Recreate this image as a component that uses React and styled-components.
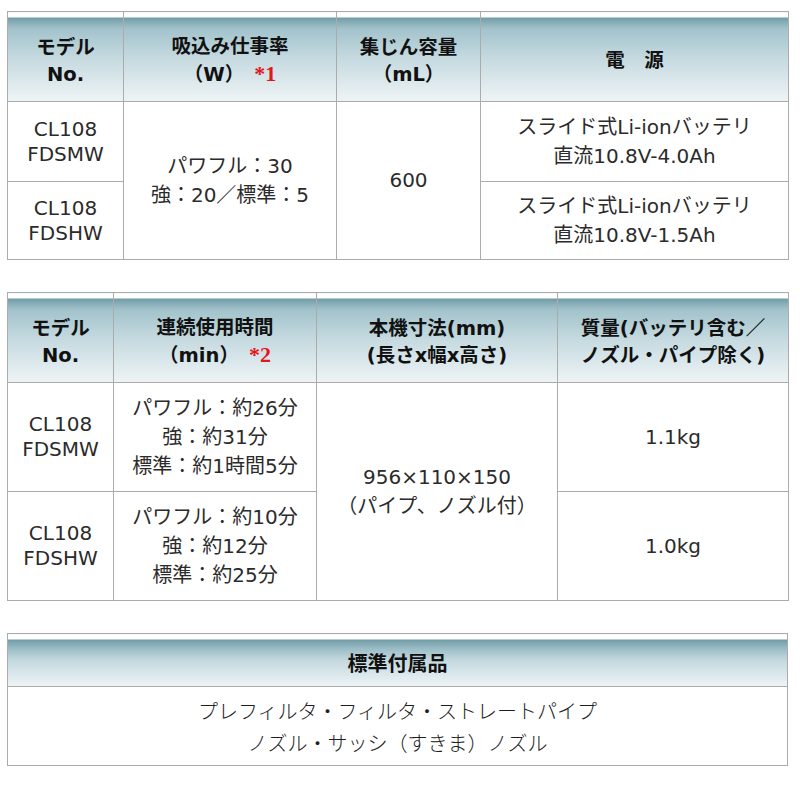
import styled, { createGlobalStyle } from "styled-components";

const GlobalStyle = createGlobalStyle`
  body {
    margin: 0;
    background: #fff;
    font-family: "DejaVu Sans", "Noto Sans CJK JP", sans-serif;
  }
`;

const Page = styled.div`
  display: flex;
  flex-direction: column;
  gap: 32px;
  padding: 11px 0 0 7px;
`;

const Table = styled.table`
  width: 781px;
  border-collapse: collapse;
  table-layout: fixed;
  border: 1px solid #ababab;
`;

const Row = styled.tr`
  height: ${(p) => p.$h}px;
`;

const HeadCell = styled.th`
  padding: 8px 4px 0;
  border: 1px solid #ababab;
  background: linear-gradient(
    to bottom,
    #ffffff 0,
    #ffffff 5px,
    #6f9aa4 5px,
    #83aab4 9px,
    #a2c2cb 16px,
    #c4d9df 50%,
    #eef4f6 100%
  );
  color: #111;
  font-size: ${(p) => p.$size || 19.5}px;
  font-weight: 700;
  line-height: 27px;
  text-align: center;
  vertical-align: middle;
`;

const Cell = styled.td`
  padding: 0 4px;
  border: 1px solid #ababab;
  color: #2b2b2b;
  font-size: 20px;
  line-height: ${(p) => (p.$model ? 25 : 29)}px;
  text-align: center;
  vertical-align: middle;
`;

const ListCell = styled(Cell)`
  color: #1e1e1e;
  font-family: "Noto Sans CJK JP", sans-serif;
  font-weight: 300;
  line-height: 32px;
  padding-top: 2px;
`;

const Note = styled.span`
  margin-left: 10px;
  color: #e3161c;
  font-family: "Liberation Serif", serif;
  font-weight: 700;
  font-size: 22px;
`;

const Lines = ({ items }) =>
  items.map((t, i) => (
    <span key={i}>
      {t}
      {i < items.length - 1 && <br />}
    </span>
  ));

export default function App() {
  return (
    <>
      <GlobalStyle />
      <Page>
        <Table>
          <colgroup>
            <col style={{ width: 116 }} />
            <col style={{ width: 213 }} />
            <col style={{ width: 144 }} />
            <col style={{ width: 308 }} />
          </colgroup>
          <thead>
            <Row $h={90}>
              <HeadCell><Lines items={["モデル", "No."]} /></HeadCell>
              <HeadCell>
                吸込み仕事率<br />（W）<Note>*1</Note>
              </HeadCell>
              <HeadCell><Lines items={["集じん容量", "（mL）"]} /></HeadCell>
              <HeadCell>電　源</HeadCell>
            </Row>
          </thead>
          <tbody>
            <Row $h={80}>
              <Cell $model><Lines items={["CL108", "FDSMW"]} /></Cell>
              <Cell rowSpan={2}><Lines items={["パワフル：30", "強：20／標準：5"]} /></Cell>
              <Cell rowSpan={2}>600</Cell>
              <Cell><Lines items={["スライド式Li-ionバッテリ", "直流10.8V-4.0Ah"]} /></Cell>
            </Row>
            <Row $h={78}>
              <Cell $model><Lines items={["CL108", "FDSHW"]} /></Cell>
              <Cell><Lines items={["スライド式Li-ionバッテリ", "直流10.8V-1.5Ah"]} /></Cell>
            </Row>
          </tbody>
        </Table>

        <Table>
          <colgroup>
            <col style={{ width: 106 }} />
            <col style={{ width: 203 }} />
            <col style={{ width: 241 }} />
            <col style={{ width: 231 }} />
          </colgroup>
          <thead>
            <Row $h={90}>
              <HeadCell><Lines items={["モデル", "No."]} /></HeadCell>
              <HeadCell>
                連続使用時間<br />（min）<Note>*2</Note>
              </HeadCell>
              <HeadCell><Lines items={["本機寸法(mm)", "(長さx幅x高さ)"]} /></HeadCell>
              <HeadCell><Lines items={["質量(バッテリ含む／", "ノズル・パイプ除く)"]} /></HeadCell>
            </Row>
          </thead>
          <tbody>
            <Row $h={109}>
              <Cell $model><Lines items={["CL108", "FDSMW"]} /></Cell>
              <Cell><Lines items={["パワフル：約26分", "強：約31分", "標準：約1時間5分"]} /></Cell>
              <Cell rowSpan={2}><Lines items={["956×110×150", "（パイプ、ノズル付）"]} /></Cell>
              <Cell>1.1kg</Cell>
            </Row>
            <Row $h={109}>
              <Cell $model><Lines items={["CL108", "FDSHW"]} /></Cell>
              <Cell><Lines items={["パワフル：約10分", "強：約12分", "標準：約25分"]} /></Cell>
              <Cell>1.0kg</Cell>
            </Row>
          </tbody>
        </Table>

        <Table>
          <thead>
            <Row $h={53}>
              <HeadCell $size={20}>標準付属品</HeadCell>
            </Row>
          </thead>
          <tbody>
            <Row $h={79}>
              <ListCell>
                <Lines items={["プレフィルタ・フィルタ・ストレートパイプ", "ノズル・サッシ（すきま）ノズル"]} />
              </ListCell>
            </Row>
          </tbody>
        </Table>
      </Page>
    </>
  );
}
